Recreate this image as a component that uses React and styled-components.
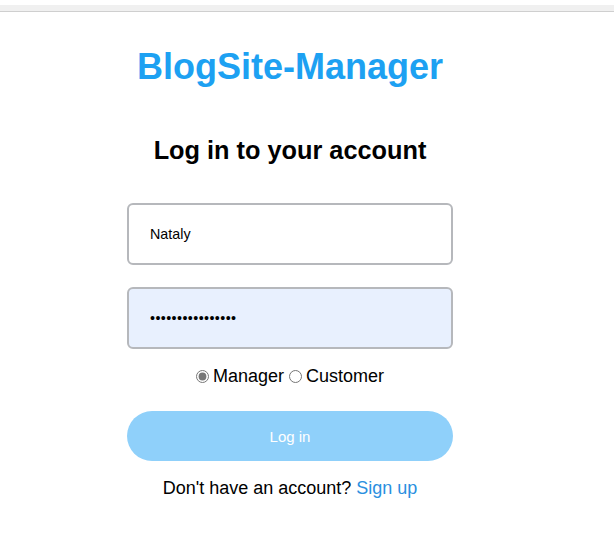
import React from 'react';
import styled, { createGlobalStyle } from 'styled-components';

const GlobalStyle = createGlobalStyle`
  body {
    margin: 0;
    background: #ffffff;
    font-family: "Liberation Sans", Arial, sans-serif;
  }
`;

const TopStrip = styled.div`
  margin-top: 5px;
  height: 6px;
  background: #f0f0f0;
  border-bottom: 1px solid #cfcfcf;
`;

const Page = styled.div`
  width: 580px;
  display: flex;
  flex-direction: column;
  align-items: center;
`;

const Brand = styled.h1`
  margin: 34px 0 0;
  font-size: 36px;
  font-weight: bold;
  color: #1da1f2;
`;

const Heading = styled.h2`
  margin: 48px 0 0;
  font-size: 25.3px;
  font-weight: bold;
  color: #000;
`;

const Form = styled.form`
  width: 326px;
  margin-top: 38px;
  display: flex;
  flex-direction: column;
`;

const Input = styled.input`
  box-sizing: border-box;
  height: 62px;
  width: 100%;
  margin-bottom: ${(p) => (p.$last ? '0' : '22px')};
  padding: 0 21px;
  font-family: "Liberation Sans", Arial, sans-serif;
  font-size: 14.3px;
  letter-spacing: ${(p) => (p.$filled ? '0.4px' : '0')};
  color: #000;
  background: ${(p) => (p.$filled ? '#e8f0fe' : '#ffffff')};
  border: 2px solid #b6b8bc;
  border-radius: 6px;
  outline: none;
`;

const RoleRow = styled.div`
  display: flex;
  justify-content: center;
  align-items: center;
  margin-top: 17px;
  font-size: 18px;
  color: #000;
`;

const RoleLabel = styled.label`
  display: flex;
  align-items: center;

  input {
    margin: 0 4px 0 0;
    width: 13px;
    height: 13px;
    accent-color: #777;
  }
`;

const Button = styled.button`
  margin-top: 24px;
  height: 50px;
  border: none;
  border-radius: 25px;
  background: #8fd0fa;
  color: #fff;
  font-family: "Liberation Sans", Arial, sans-serif;
  font-size: 15px;
  cursor: pointer;
`;

const Footer = styled.p`
  margin: 17px 0 0;
  text-align: center;
  font-size: 18px;
  color: #000;

  a {
    color: #2a8fe0;
    text-decoration: none;
  }
`;

export default function App() {
  return (
    <>
      <GlobalStyle />
      <TopStrip />
      <Page>
        <Brand>BlogSite-Manager</Brand>
        <Heading>Log in to your account</Heading>
        <Form onSubmit={(e) => e.preventDefault()}>
          <Input type="text" defaultValue="Nataly" />
          <Input type="password" defaultValue="1234567890123456" $filled $last />
          <RoleRow>
            <RoleLabel>
              <input type="radio" name="role" defaultChecked />
              Manager
            </RoleLabel>
            &nbsp;
            <RoleLabel>
              <input type="radio" name="role" />
              Customer
            </RoleLabel>
          </RoleRow>
          <Button type="submit">Log in</Button>
          <Footer>
            Don't have an account? <a href="#">Sign up</a>
          </Footer>
        </Form>
      </Page>
    </>
  );
}
